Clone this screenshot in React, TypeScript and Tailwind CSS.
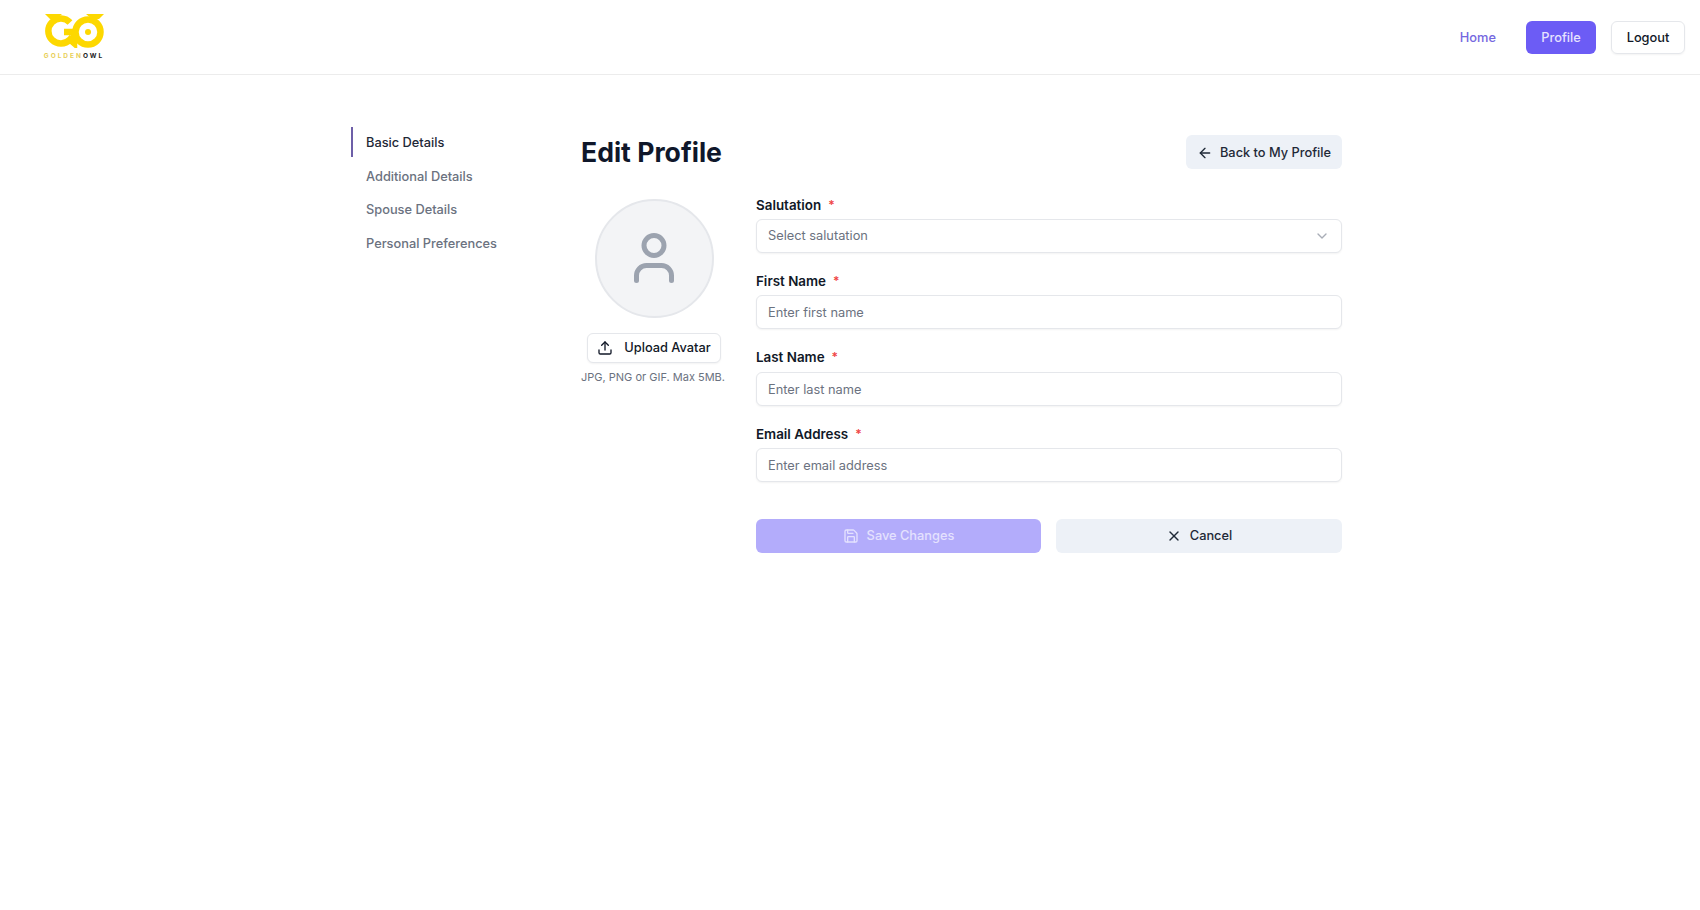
import { ArrowLeft, ChevronDown, Save, Upload, User, X } from 'lucide-react';

const sections = ['Basic Details', 'Additional Details', 'Spouse Details', 'Personal Preferences'];

function Logo() {
  return (
    <div className="mt-[-1px] flex w-[60px] flex-col items-center">
      <svg viewBox="0 0 59 34" className="h-[34px] w-[59px]" fill="none">
        <path d="M0 0h17l-6 5H5z" fill="#fdd800" />
        <path d="M59 0H41l6 5h7z" fill="#fdd800" />
        <path d="M25 8.5A12.5 12.5 0 1 0 25 25.5L29 29V18H19" stroke="#fdd800" strokeWidth="6.5" />
        <circle cx="43" cy="18" r="12.5" stroke="#fdd800" strokeWidth="6.5" />
        <circle cx="43" cy="18" r="3" fill="#fdd800" />
      </svg>
      <div className="mt-[5px] flex text-[6.5px] leading-[6px] font-bold tracking-[2px] whitespace-nowrap">
        <span className="text-[#e8cf5a]">GOLDEN</span>
        <span className="text-[#222]">OWL</span>
      </div>
    </div>
  );
}

function Field({ label, placeholder, select }: { label: string; placeholder: string; select?: boolean }) {
  return (
    <div>
      <label className="flex h-5 items-center pt-[1.5px] text-[13.4px] font-semibold text-[#111827]">
        {label}
        <span className="ml-[7px] text-[12px] text-[#ef4444]">*</span>
      </label>
      <div className="mt-[5px] flex h-[34px] items-center justify-between rounded-md border border-[#e5e7eb] bg-white px-[11px] text-[12.8px] text-[#6b7280] shadow-[0_1px_2px_rgba(0,0,0,0.05)]">
        <span className={select ? '' : 'pt-[1px]'}>{placeholder}</span>
        {select && <ChevronDown className="h-4 w-4 text-[#a8adb6]" />}
      </div>
    </div>
  );
}

export default function App() {
  return (
    <div className="min-h-[910px] bg-white font-['Inter',sans-serif]">
      <header className="flex h-[75px] items-center justify-between border-b border-[#ececec] pr-[15px] pl-[44px]">
        <Logo />
        <nav className="flex items-center pt-[1px] text-[12.8px] font-medium">
          <a className="mr-[30px] pt-[1px] text-[#7467e0]">Home</a>
          <a className="flex h-[33px] w-[70px] items-center justify-center rounded-md bg-[#6c5cf5] pt-[1px] text-[#e6e2ff]">Profile</a>
          <a className="ml-[15px] flex h-[33px] w-[74px] items-center justify-center rounded-md border border-[#e5e7eb] pt-[1px] text-[#111827] shadow-[0_1px_2px_rgba(0,0,0,0.05)]">Logout</a>
        </nav>
      </header>

      <main className="ml-[351px] flex w-[991px] pt-[52px]">
        <aside className="w-[230px] shrink-0 text-[12.8px] font-medium text-[#6b7280]">
          {sections.map((s, i) => (
            <div
              key={s}
              className={
                i === 0
                  ? 'mb-[3.5px] flex h-[30px] items-center border-l-2 border-[#6d5fa8] pt-[1.5px] pl-[13px] text-[#1f2937]'
                  : 'mb-[3.5px] flex h-[30px] items-center border-l-2 border-transparent pt-[1.5px] pl-[13px]'
              }
            >
              {s}
            </div>
          ))}
        </aside>

        <div className="min-w-0 flex-1">
          <div className="mt-[8px] flex h-[34px] items-center justify-between">
            <h1 className="pt-[2px] text-[26.6px] font-bold text-[#0f172a]">Edit Profile</h1>
            <button className="flex h-[34px] w-[156px] items-center justify-center gap-[7px] rounded-md bg-[#edf1f7] pt-[1px] text-[12.8px] font-medium text-[#1f2937]">
              <ArrowLeft className="h-4 w-4" />
              Back to My Profile
            </button>
          </div>

          <div className="mt-[19px] flex">
            <div className="flex w-[175px] shrink-0 flex-col items-start">
              <div className="mt-[10.5px] ml-[13.5px] flex h-[119px] w-[119px] items-center justify-center rounded-full border-2 border-[#e5e7eb] bg-[#f3f4f6]">
                <User className="h-[60px] w-[60px] text-[#9ca3af]" strokeWidth={2} />
              </div>
              <button className="mt-[15px] ml-[6px] flex h-[30px] w-[134px] items-center justify-center gap-[11px] rounded-md border border-[#e5e7eb] bg-white text-[12.8px] font-medium text-[#111827] shadow-[0_1px_2px_rgba(0,0,0,0.05)]">
                <Upload className="h-4 w-4" />
                Upload Avatar
              </button>
              <p className="mt-[6px] text-[11px] whitespace-nowrap text-[#6b7280]">JPG, PNG or GIF. Max 5MB.</p>
            </div>

            <form className="mt-[6px] min-w-0 flex-1">
              <div className="flex flex-col gap-[17.3px]">
                <Field label="Salutation" placeholder="Select salutation" select />
                <Field label="First Name" placeholder="Enter first name" />
                <Field label="Last Name" placeholder="Enter last name" />
                <Field label="Email Address" placeholder="Enter email address" />
              </div>
              <div className="mt-[37px] grid grid-cols-[285px_1fr] gap-[15px]">
                <button type="button" className="flex h-[34px] items-center justify-center gap-2 rounded-md bg-[#b3acfb] text-[12.8px] font-medium text-[#e4e1fe]">
                  <Save className="h-4 w-4" />
                  Save Changes
                </button>
                <button type="button" className="flex h-[34px] items-center justify-center gap-2 rounded-md bg-[#edf1f7] text-[12.8px] font-medium text-[#1f2937]">
                  <X className="h-4 w-4" />
                  Cancel
                </button>
              </div>
            </form>
          </div>
        </div>
      </main>
    </div>
  );
}
